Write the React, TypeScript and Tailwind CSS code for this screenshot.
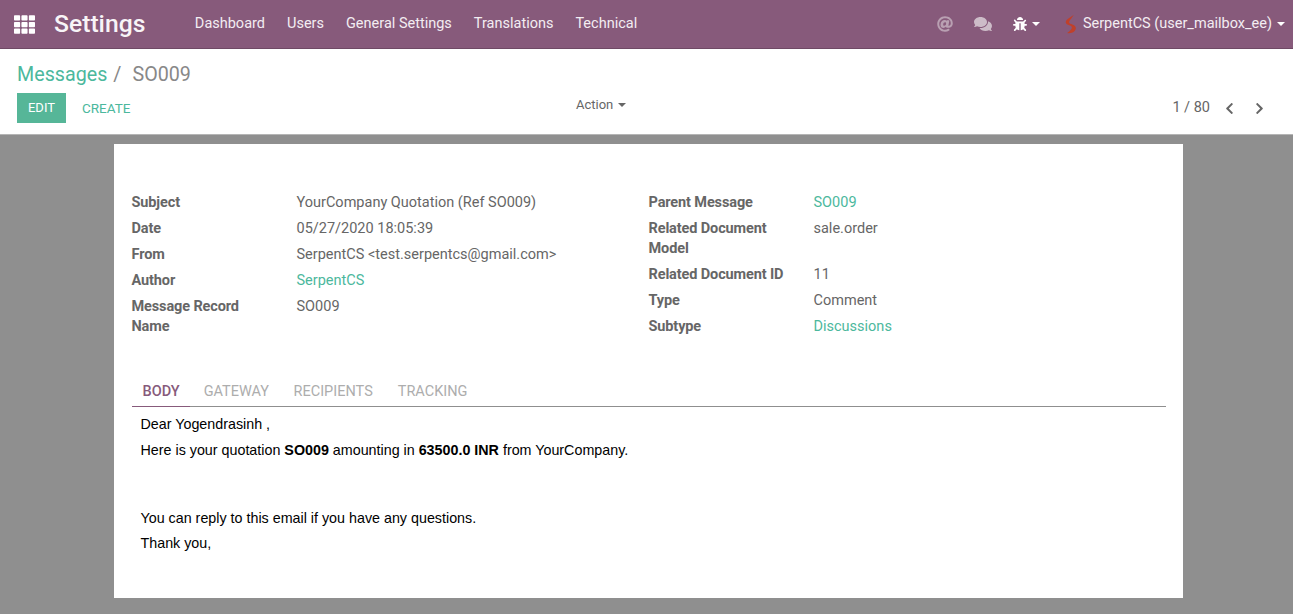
import { FaTh, FaComments, FaBug, FaAt, FaChevronLeft, FaChevronRight } from 'react-icons/fa'

const navLinks = ['Dashboard', 'Users', 'General Settings', 'Translations', 'Technical']

const Caret = ({ className = '' }: { className?: string }) => (
  <span
    className={`inline-block border-x-[4.5px] border-t-[4.5px] border-x-transparent border-t-current ${className}`}
  />
)

const leftFields = [
  { label: ['Subject'], value: 'YourCompany Quotation (Ref SO009)' },
  { label: ['Date'], value: '05/27/2020 18:05:39' },
  { label: ['From'], value: 'SerpentCS <test.serpentcs@gmail.com>' },
  { label: ['Author'], value: 'SerpentCS', link: true },
  { label: ['Message Record', 'Name'], value: 'SO009' },
]

const rightFields = [
  { label: ['Parent Message'], value: 'SO009', link: true },
  { label: ['Related Document', 'Model'], value: 'sale.order' },
  { label: ['Related Document ID'], value: '11' },
  { label: ['Type'], value: 'Comment' },
  { label: ['Subtype'], value: 'Discussions', link: true },
]

type Field = { label: string[]; value: string; link?: boolean }

const FieldGroup = ({ fields, className = '' }: { fields: Field[]; className?: string }) => (
  <div className={`flex flex-col ${className}`}>
    {fields.map((f) => (
      <div key={f.value} className="flex pb-[6px] leading-[20px]">
        <div className="w-[165px] shrink-0 font-bold tracking-[-0.12px] text-[#666666]">
          {f.label.map((l) => (
            <div key={l}>{l}</div>
          ))}
        </div>
        <div className={f.link ? 'text-[#4cb89d]' : 'text-[#666666]'}>{f.value}</div>
      </div>
    ))}
  </div>
)

export default function App() {
  return (
    <div className="flex h-[614px] flex-col overflow-hidden bg-[#8f8f8f] font-['Roboto',sans-serif] text-[14.5px]">
      {/* top nav */}
      <nav className="flex h-[49px] shrink-0 items-center border-b border-[#6f4a65] bg-[#875a7b] text-white">
        <FaTh className="ml-[14px] size-[21px]" />
        <span className="ml-[19px] text-[24.7px] leading-none font-medium text-[#f8f4f7]">Settings</span>
        <div className="ml-[49.5px] flex gap-[22px] text-[#f3edf2]">
          {navLinks.map((l) => (
            <span key={l}>{l}</span>
          ))}
        </div>
        <div className="ml-auto flex items-center">
          <FaAt className="size-[16px] text-[#b9a0b2]" />
          <FaComments className="ml-[21px] size-[18px] text-[#cdbcc8]" />
          <FaBug className="ml-[21px] size-[14px]" />
          <Caret className="ml-[5px]" />
          <svg viewBox="0 0 14 20" className="ml-[23px] h-[19px] w-[14px]">
            <path
              d="M11 0 C6 3 1 6 3 9 C5 11 9 11 9 13 C9 15 7 17 4 19 C9 20 14 17 13 13 C12 10 7 10 6 8 C6 6 9 3 11 0 Z"
              fill="#c0402a"
            />
          </svg>
          <span className="ml-[6px] text-[#f3edf2]">SerpentCS (user_mailbox_ee)</span>
          <Caret className="mr-[8px] ml-[5px]" />
        </div>
      </nav>

      {/* control panel */}
      <div className="flex h-[86px] shrink-0 flex-col border-b border-[#b5b5b5] bg-white px-[17px]">
        <div className="mt-[13px] flex items-center text-[19.7px] leading-[26px]">
          <span className="text-[#4cb89d]">Messages</span>
          <span className="ml-[6px] text-[#888888]">/</span>
          <span className="ml-[11px] text-[#888888]">SO009</span>
        </div>
        <div className="relative mt-[5px] flex items-center">
          <button className="h-[30px] w-[49px] bg-[#56b698] text-[13px] text-white">EDIT</button>
          <button className="ml-[16px] text-[13.5px] text-[#4cb89d]">CREATE</button>
          <div className="absolute top-[2px] left-[559px] flex items-center gap-[5px] text-[13px] text-[#666666]">
            Action <Caret />
          </div>
          <div className="ml-auto flex items-center pr-[10px] text-[#666666]">
            <span>1 / 80</span>
            <FaChevronLeft className="ml-[13px] size-[13px]" />
            <FaChevronRight className="ml-[17px] size-[13px]" />
          </div>
        </div>
      </div>

      {/* sheet */}
      <main className="mt-[9px] mr-[110px] ml-[114px] h-[454px] shrink-0 bg-white pt-[49px] pr-[17px] pl-[17.5px]">
        <div className="flex h-[183px]">
          <FieldGroup fields={leftFields} className="w-[517px]" />
          <FieldGroup fields={rightFields} />
        </div>

        <div className="relative flex h-[31px] items-center border-b border-[#8f8f8f] pt-[1px]">
          <span className="ml-[11px] font-medium text-[#875a7b]">BODY</span>
          <span className="ml-[24px] text-[#adadad]">GATEWAY</span>
          <span className="ml-[24.5px] text-[#adadad]">RECIPIENTS</span>
          <span className="ml-[25px] text-[#adadad]">TRACKING</span>
          <span className="absolute -bottom-px left-0 h-px w-[58px] bg-[#875a7b]" />
        </div>

        <div className="px-[9px] pt-[7px] font-['Liberation_Sans',sans-serif] text-[14.3px] text-black">
          <p className="leading-[20px]">Dear Yogendrasinh ,</p>
          <p className="mt-[6px] leading-[20px]">
            Here is your quotation <b>SO009</b> amounting in <b>63500.0 INR</b> from YourCompany.
          </p>
          <p className="mt-[48px] leading-[20px]">You can reply to this email if you have any questions.</p>
          <p className="mt-[5px] leading-[20px]">Thank you,</p>
        </div>
      </main>
    </div>
  )
}
